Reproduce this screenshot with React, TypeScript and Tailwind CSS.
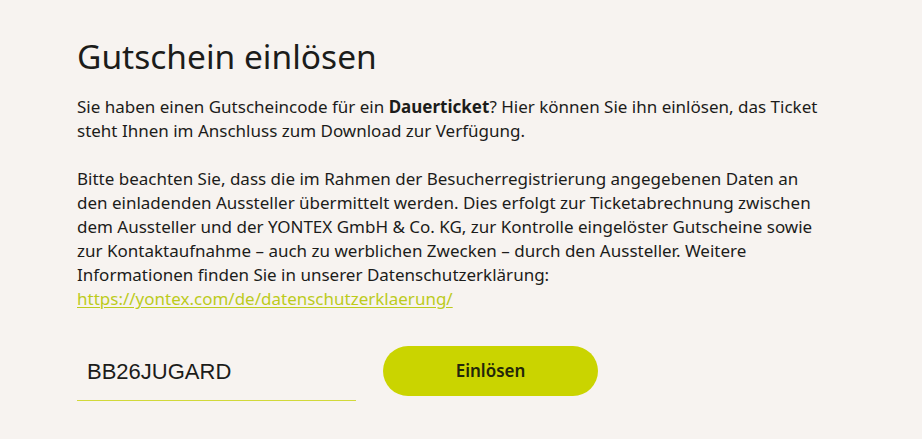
import React, { useState } from 'react';

const PRIVACY_URL = 'https://yontex.com/de/datenschutzerklaerung/';

const App: React.FC = () => {
  const [code, setCode] = useState('BB26JUGARD');

  return (
    <div className="min-h-screen bg-[#f7f3f0] text-[#1c1c1a] font-['Noto_Sans',sans-serif]">
      <div className="pl-[77px] pr-[60px] pt-[34px]">
        <h1 className="text-[33.5px] leading-[44px] font-normal mb-[17px]">Gutschein einlösen</h1>

        <p className="text-[17px] leading-6 max-w-[750px] mb-[24px]">
          Sie haben einen Gutscheincode für ein <strong className="font-bold">Dauerticket</strong>? Hier
          können Sie ihn einlösen, das Ticket steht Ihnen im Anschluss zum Download zur Verfügung.
        </p>

        <p className="text-[17px] leading-6 max-w-[750px]">
          Bitte beachten Sie, dass die im Rahmen der Besucherregistrierung angegebenen Daten an den
          einladenden Aussteller übermittelt werden. Dies erfolgt zur Ticketabrechnung zwischen dem
          Aussteller und der YONTEX GmbH &amp; Co. KG, zur Kontrolle eingelöster Gutscheine sowie zur
          Kontaktaufnahme – auch zu werblichen Zwecken – durch den Aussteller. Weitere Informationen
          finden Sie in unserer Datenschutzerklärung:
          <br />
          <a href={PRIVACY_URL} className="text-[#bccb1c] underline underline-offset-2">
            {PRIVACY_URL}
          </a>
        </p>

        <form
          className="flex items-start gap-[27px] mt-[32px]"
          onSubmit={(e) => e.preventDefault()}
        >
          <input
            type="text"
            value={code}
            onChange={(e) => setCode(e.target.value)}
            className="w-[279px] h-[58px] pl-[10px] bg-transparent border-0 border-b border-solid border-[#d2d93a] outline-none text-[22px] text-[#1c1c1a] font-['Liberation_Sans',sans-serif]"
          />
          <button
            type="submit"
            className="w-[215px] h-[50px] mt-[3px] rounded-full bg-[#cad400] text-[17px] font-semibold text-[#22260a]"
          >
            Einlösen
          </button>
        </form>
      </div>
    </div>
  );
};

export default App;
